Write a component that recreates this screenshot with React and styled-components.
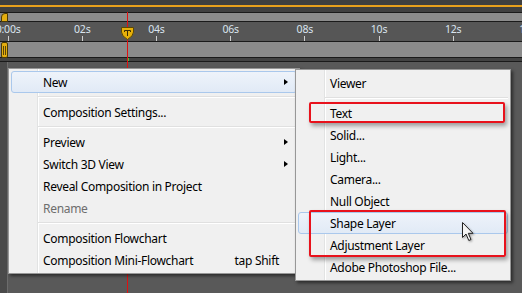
import React from "react";
import styled, { createGlobalStyle, css } from "styled-components";

const Global = createGlobalStyle`
  html, body { margin: 0; padding: 0; background: #595959; }
  body { font-family: "Noto Sans", "Open Sans", sans-serif; }
`;

const Frame = styled.div`
  position: relative;
  width: 522px;
  height: 293px;
  overflow: hidden;
  display: flex;
  flex-direction: column;
  background: #595959;
`;

const TopBand = styled.div`
  height: 12px;
  background: linear-gradient(#3f3f3f 0 5px, #e8a01c 5px 7px, #404040 7px);
`;

const Bar = styled.div`
  position: relative;
  height: ${p => p.$h}px;
  background: #8b8b8b;
  border-top: 1px solid #1a1a1a;
  border-bottom: 1px solid #1a1a1a;
`;

const WorkHandle = styled.div`
  position: absolute;
  left: 1px;
  top: 0;
  width: 5px;
  height: 7px;
  background: #e3ad0f;
  border: 1px solid #4a3a06;
  border-radius: 4px 0 0 1px;
`;

const LayerHandle = styled.div`
  position: absolute;
  left: 1px;
  top: 0;
  width: 5px;
  height: 11px;
  padding-top: 3px;
  background: #e3ad0f;
  border: 1px solid #4a3a06;
  border-radius: 2px;
  display: flex;
  justify-content: center;
  gap: 1px;
  & > i {
    width: 1px;
    height: 9px;
    background: #5a4508;
  }
`;

const Ruler = styled.div`
  height: 19px;
  background: #565656;
  display: flex;
  margin-left: -29px;
`;

const Cell = styled.div`
  flex: 0 0 74.2px;
  display: flex;
  flex-direction: column;
  align-items: center;
  justify-content: flex-end;
`;

const TimeLabel = styled.span`
  font-size: 10.5px;
  line-height: 12px;
  color: #dae4ee;
  letter-spacing: -0.2px;
`;

const Tick = styled.i`
  width: 1px;
  height: 5px;
  margin-top: 1px;
  background: #cfcfcf;
`;

const Gap = styled.div`
  height: 3px;
  background: #434343;
  border-bottom: 1px solid #1a1a1a;
`;

const Stage = styled.div`
  flex: 1;
  display: flex;
`;

const LeftStrip = styled.div`
  width: 7px;
  background: #4a4a4a;
  border-right: 1px solid #6c6c6c;
`;

const TimeLine = styled.div`
  position: absolute;
  left: 127px;
  top: 12px;
  bottom: 0;
  width: 1px;
  background: #e01010;
`;

const Playhead = styled.svg`
  position: absolute;
  left: 121px;
  top: 27px;
`;

const GreenMark = styled.div`
  position: absolute;
  left: 128px;
  top: 58px;
  width: 1px;
  height: 3px;
  background: #3ccf3c;
`;

const Menu = styled.div`
  position: absolute;
  left: ${p => p.$left}px;
  top: ${p => p.$top}px;
  width: ${p => p.$width}px;
  box-sizing: border-box;
  padding: 2px;
  border: 1px solid #979797;
  background:
    linear-gradient(to right, transparent 28px, #e2e3e3 28px 29px, #fff 29px 30px, transparent 30px),
    #f0f0f0;
  box-shadow: 2px 2px 3px rgba(0, 0, 0, 0.5);
  font-family: "Noto Sans", "Open Sans", sans-serif;
  font-size: 12px;
  color: #000;
`;

const Item = styled.div`
  position: relative;
  height: 22px;
  box-sizing: border-box;
  display: flex;
  align-items: center;
  padding: 0 17px 0 31px;
  border: 1px solid transparent;
  border-radius: 3px;
  white-space: nowrap;
  letter-spacing: -0.3px;
  ${p => p.$hot && css`
    border-color: #aac8ec;
    background: linear-gradient(#eef3fa, #e1eaf6);
  `}
  ${p => p.$disabled && css`
    color: #6d6d6d;
  `}
`;

const Arrow = styled.i`
  position: absolute;
  right: 8px;
  top: 7px;
  width: 0;
  height: 0;
  border-top: 3.5px solid transparent;
  border-bottom: 3.5px solid transparent;
  border-left: 4px solid #000;
`;

const Shortcut = styled.span`
  margin-left: auto;
`;

const Separator = styled.div`
  height: 8px;
  display: flex;
  align-items: center;
  margin-left: 27px;
  &::after {
    content: "";
    flex: 1;
    height: 0;
    border-top: 1px solid #e0e0e0;
    border-bottom: 1px solid #fff;
  }
`;

const Callout = styled.div`
  position: absolute;
  left: ${p => p.$left}px;
  top: ${p => p.$top}px;
  width: ${p => p.$width}px;
  height: ${p => p.$height}px;
  box-sizing: border-box;
  border: 2px solid #e8121c;
  border-radius: 2px;
  box-shadow: 2px 3px 4px rgba(0, 0, 0, 0.35);
`;

const Cursor = styled.svg`
  position: absolute;
  left: 462px;
  top: 222px;
  filter: drop-shadow(1px 1px 1px rgba(0, 0, 0, 0.35));
`;

const ticks = ["0:00s", "02s", "04s", "06s", "08s", "10s", "12s", "14s"];

const mainItems = [
  { label: "New", sub: true, hot: true },
  "-",
  { label: "Composition Settings..." },
  "-",
  { label: "Preview", sub: true },
  { label: "Switch 3D View", sub: true },
  { label: "Reveal Composition in Project" },
  { label: "Rename", disabled: true },
  "-",
  { label: "Composition Flowchart" },
  { label: "Composition Mini-Flowchart", shortcut: "tap Shift" },
];

const subItems = [
  { label: "Viewer" },
  "-",
  { label: "Text" },
  { label: "Solid..." },
  { label: "Light..." },
  { label: "Camera..." },
  { label: "Null Object" },
  { label: "Shape Layer", hot: true },
  { label: "Adjustment Layer" },
  { label: "Adobe Photoshop File..." },
];

const MenuList = ({ items }) =>
  items.map((it, i) =>
    it === "-" ? (
      <Separator key={i} />
    ) : (
      <Item key={i} $hot={it.hot} $disabled={it.disabled}>
        {it.label}
        {it.shortcut && <Shortcut>{it.shortcut}</Shortcut>}
        {it.sub && <Arrow />}
      </Item>
    )
  );

const App = () => (
  <>
    <Global />
    <Frame>
      <TopBand />
      <Bar $h={8}>
        <WorkHandle />
      </Bar>
      <Ruler>
        {ticks.map(t => (
          <Cell key={t}>
            <TimeLabel>{t}</TimeLabel>
            <Tick />
          </Cell>
        ))}
      </Ruler>
      <Bar $h={15}>
        <LayerHandle>
          <i />
          <i />
        </LayerHandle>
      </Bar>
      <Gap />
      <Stage>
        <LeftStrip />
      </Stage>

      <TimeLine />
      <GreenMark />
      <Playhead width="13" height="13" viewBox="0 0 13 13">
        <path d="M0.5 0.5 H12.5 V5 Q12.5 9 6.5 12.5 Q0.5 9 0.5 5 Z" fill="#e6b00a" stroke="#5c4806" />
        <path d="M3.5 5 V3.5 H9.5 V5 M6.5 3.5 V9" fill="none" stroke="#3a2c04" />
      </Playhead>

      <Menu $left={8} $top={68} $width={292}>
        <MenuList items={mainItems} />
      </Menu>
      <Menu $left={295} $top={69} $width={216}>
        <MenuList items={subItems} />
      </Menu>

      <Callout $left={309} $top={102} $width={196} $height={21} />
      <Callout $left={309} $top={210} $width={197} $height={47} />

      <Cursor width="13" height="20" viewBox="0 0 13 20">
        <path d="M0.5 0.5 V15.5 L4 12 L6.8 18.5 L9 17.5 L6.3 11.3 H11 Z" fill="#f4f4f4" stroke="#222" strokeLinejoin="round" />
      </Cursor>
    </Frame>
  </>
);

export default App;
